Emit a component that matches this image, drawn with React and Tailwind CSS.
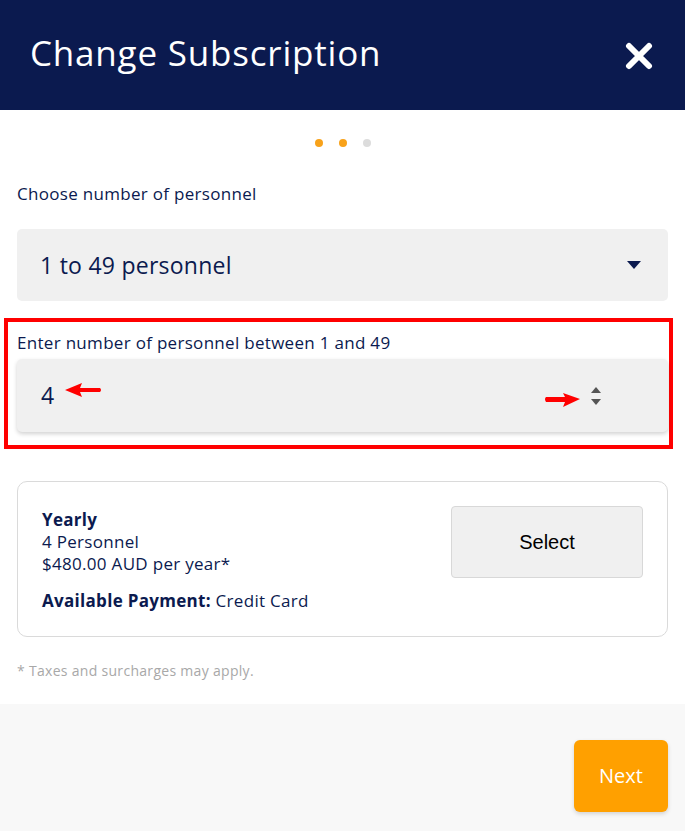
export default function App() {
  const navy = "text-[#0b1a4f]";
  return (
    <div className="w-[685px] h-[831px] bg-white flex flex-col overflow-hidden" style={{ fontFamily: "'Open Sans', Roboto, sans-serif" }}>
      <div className="h-[110px] bg-[#0b1a4f] flex items-center justify-between pl-[30px] pr-[32px] shrink-0">
        <h1 className="text-white text-[35px] leading-none tracking-[0.8px] mb-[5px]">Change Subscription</h1>
        <svg width="28" height="28" viewBox="0 0 28 28" className="mt-[2px]">
          <path d="M4 4 L24 24 M24 4 L4 24" stroke="white" strokeWidth="6" strokeLinecap="round" />
        </svg>
      </div>

      <div className="flex-1 flex flex-col">
        <div className="flex justify-center gap-[16px] pt-[29px]">
          <span className="w-[8px] h-[8px] rounded-full bg-[#f8a21a]" />
          <span className="w-[8px] h-[8px] rounded-full bg-[#f8a21a]" />
          <span className="w-[8px] h-[8px] rounded-full bg-[#dcdcdc]" />
        </div>

        <div className="px-[17px] pt-[37px]">
          <div className={`text-[17px] leading-[20px] tracking-[0.3px] ${navy}`}>Choose number of personnel</div>
          <div className="mt-[25px] h-[72px] bg-[#f0f0f0] rounded-[5px] flex items-center justify-between pl-[23px] pr-[27px]">
            <span className={`text-[23px] tracking-[0.25px] ${navy}`}>1 to 49 personnel</span>
            <svg width="14" height="9" viewBox="0 0 14 9"><path d="M0 0 H14 L7 8 Z" fill="#0b1a4f" /></svg>
          </div>
        </div>

        <div className="ml-[4px] mr-[12px] mt-[17px] h-[131px] border-[4px] border-[#ff0000] pl-[9px] pr-[1px] pt-[11px]">
          <div className={`text-[17px] leading-[20px] tracking-[0.3px] ${navy}`}>Enter number of personnel between 1 and 49</div>
          <div className="relative mt-[6px] h-[73px] bg-[#f0f0f0] rounded-[5px] shadow-[0_2px_4px_rgba(0,0,0,0.18)] flex items-center pl-[24px]">
            <span className={`text-[23px] ${navy}`}>4</span>
            <svg className="absolute left-[48px] top-[23px]" width="38" height="16" viewBox="0 0 38 16">
              <path d="M0 8 L17 1 L15 6 L35 6 Q37 8 35 10 L15 10 L17 15 Z" fill="#ff0000" />
            </svg>
            <svg className="absolute left-[527px] top-[33px]" width="36" height="16" viewBox="0 0 36 16">
              <path d="M36 7 L19 1 L21 5 L2 5 Q0 7 2 10 L21 10 L19 15 Z" fill="#ff0000" />
            </svg>
            <svg className="absolute left-[573px] top-[27px]" width="12" height="20" viewBox="0 0 12 20">
              <path d="M1 7 L6 1 L11 7 Z" fill="#555" />
              <path d="M1 13 L11 13 L6 19 Z" fill="#555" />
            </svg>
          </div>
        </div>

        <div className="mx-[17px] mt-[32px] h-[156px] border border-[#dadada] rounded-[10px] flex items-start justify-between pl-[24px] pr-[24px] pt-[24px]">
          <div className={`${navy} text-[17px] leading-[22px] tracking-[0.3px] pt-[3px]`}>
            <div className="font-bold">Yearly</div>
            <div>4 Personnel</div>
            <div>$480.00 AUD per year*</div>
            <div className="mt-[15px]"><span className="font-bold">Available Payment:</span> Credit Card</div>
          </div>
          <button className="w-[192px] h-[72px] bg-[#f0f0f0] border border-[#d8d8d8] rounded-[4px] text-[20px] text-black" style={{ fontFamily: "'Liberation Sans', Arial, sans-serif" }}>Select</button>
        </div>

        <div className="px-[17px] mt-[23px] text-[14px] tracking-[0.3px] text-[#a8a8a8]">* Taxes and surcharges may apply.</div>
      </div>

      <div className="h-[127px] bg-[#f8f8f8] flex items-start justify-end pr-[17px] pt-[36px] shrink-0">
        <button className="w-[94px] h-[72px] bg-[#ffa000] rounded-[6px] text-white text-[20px] font-medium shadow-[0_2px_4px_rgba(0,0,0,0.15)]" style={{ fontFamily: "'Open Sans', sans-serif" }}>Next</button>
      </div>
    </div>
  );
}
